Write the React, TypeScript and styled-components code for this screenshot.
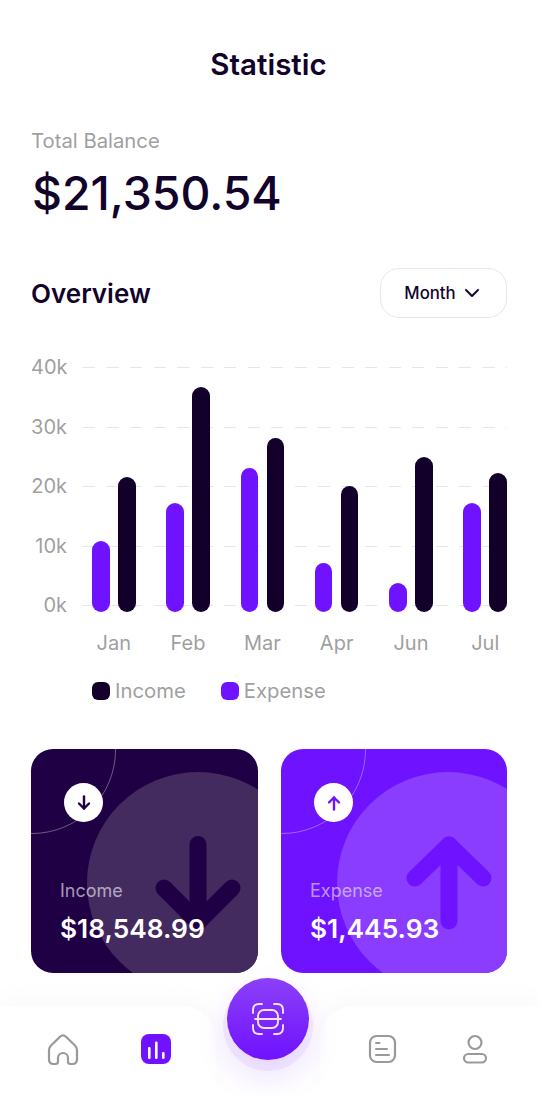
import React from 'react'
import styled, { createGlobalStyle } from 'styled-components'

const INK = '#12032b'
const PURPLE = '#6f12ff'
const DARK = '#1f0044'
const GREY = '#9f9f9f'

const Global = createGlobalStyle`
    html, body {
        margin: 0;
        padding: 0;
        background: #ffffff;
    }
    * {
        box-sizing: border-box;
    }
`

const Page = styled.div`
    width: 540px;
    height: 1098px;
    overflow: hidden;
    display: flex;
    flex-direction: column;
    font-family: Inter, "Liberation Sans", sans-serif;
    color: ${INK};
    background: #ffffff;
`

const Content = styled.main`
    display: flex;
    flex-direction: column;
    padding: 47px 33px 0 31px;
`

const Title = styled.h1`
    margin: 0;
    padding-right: 1px;
    font-size: 29.5px;
    line-height: 34px;
    font-weight: 600;
    text-align: center;
`

const BalanceLabel = styled.div`
    margin-top: 48px;
    font-size: 20.3px;
    line-height: 24px;
    color: ${GREY};
`

const BalanceValue = styled.div`
    margin-top: 12px;
    padding-left: 1px;
    font-size: 46.4px;
    line-height: 56px;
    font-weight: 500;
`

const OverviewRow = styled.div`
    margin-top: 47px;
    display: flex;
    align-items: center;
    justify-content: space-between;
`

const SectionTitle = styled.h2`
    margin: 0;
    padding-top: 1px;
    font-size: 26px;
    line-height: 30px;
    font-weight: 600;
`

const PeriodButton = styled.button`
    width: 127px;
    height: 50px;
    display: flex;
    align-items: center;
    justify-content: center;
    gap: 8px;
    padding: 0 3px 0 0;
    background: #ffffff;
    border: 1px solid #e7e5ef;
    border-radius: 19px;
    font-family: inherit;
    font-size: 16.8px;
    font-weight: 500;
    color: ${INK};
`

const Chart = styled.section`
    margin-top: 37px;
    display: grid;
    grid-template-columns: 52px 1fr;
`

const YAxis = styled.div`
    height: 262px;
    display: flex;
    flex-direction: column;
    justify-content: space-between;
    padding-right: 16px;
    text-align: right;
    font-size: 20px;
    line-height: 24px;
    color: ${GREY};
`

const Plot = styled.div`
    position: relative;
    display: flex;
    justify-content: space-between;
    padding-left: 9px;
`

const GridLines = styled.div`
    position: absolute;
    top: 12px;
    left: 0;
    right: 0;
    height: 239px;
    display: flex;
    flex-direction: column;
    justify-content: space-between;
`

const GridLine = styled.div`
    height: 1px;
    background: repeating-linear-gradient(90deg, #e6e4f0 0 12px, transparent 12px 23.5px);
`

const Group = styled.div`
    position: relative;
    width: 43.5px;
    display: flex;
    flex-direction: column;
    align-items: center;
`

const Bars = styled.div`
    width: 100%;
    height: 262px;
    padding-bottom: 5px;
    display: flex;
    align-items: flex-end;
    justify-content: space-between;
`

const Bar = styled.div<{ $dark?: boolean; $height: number }>`
    width: 17.5px;
    height: ${props => props.$height}px;
    border-radius: 9px;
    background: ${props => (props.$dark ? '#12002b' : PURPLE)};
`

const MonthLabel = styled.div`
    margin-top: 14px;
    font-size: 20px;
    line-height: 24px;
    color: ${GREY};
    white-space: nowrap;
`

const Legend = styled.div`
    margin-top: 24px;
    padding-left: 61px;
    display: flex;
    gap: 35px;
`

const LegendItem = styled.div`
    display: flex;
    align-items: center;
    gap: 5px;
    font-size: 20.3px;
    line-height: 24px;
    color: ${GREY};
`

const Swatch = styled.span<{ $color: string }>`
    width: 18px;
    height: 18px;
    border-radius: 6px;
    background: ${props => props.$color};
`

const Cards = styled.div`
    margin-top: 46px;
    display: grid;
    grid-template-columns: 227px 226px;
    justify-content: space-between;
`

const Card = styled.div<{ $bg: string; $overlay: string }>`
    position: relative;
    height: 224px;
    overflow: hidden;
    padding: 34px 0 0 29px;
    border-radius: 22px;
    color: #ffffff;
    background: ${props => props.$bg};

    &::before {
        content: '';
        position: absolute;
        left: 56px;
        top: 23px;
        width: 222px;
        height: 222px;
        border-radius: 50%;
        background: ${props => props.$overlay};
    }

    &::after {
        content: '';
        position: absolute;
        left: -83px;
        top: -83px;
        width: 166px;
        height: 166px;
        border-radius: 50%;
        border: 1px solid rgba(255, 255, 255, 0.35);
    }
`

const BigArrow = styled.svg`
    position: absolute;
    left: 122px;
    top: 76px;
    width: 90px;
    height: 110px;
    fill: none;
    stroke-width: 17;
    stroke-linecap: round;
    stroke-linejoin: round;
`

const CardBadge = styled.div`
    position: relative;
    z-index: 1;
    width: 39px;
    height: 39px;
    margin-left: 4px;
    display: flex;
    align-items: center;
    justify-content: center;
    border-radius: 50%;
    background: #ffffff;
`

const BadgeArrow = styled.svg`
    width: 20px;
    height: 20px;
    fill: none;
    stroke-width: 2.4;
    stroke-linecap: round;
    stroke-linejoin: round;
`

const CardLabel = styled.div<{ $color: string }>`
    position: relative;
    z-index: 1;
    margin-top: 58px;
    font-size: 18px;
    line-height: 22px;
    color: ${props => props.$color};
`

const CardValue = styled.div`
    position: relative;
    z-index: 1;
    margin-top: 11px;
    font-size: 26.3px;
    line-height: 32px;
    font-weight: 600;
`

const BottomNav = styled.nav`
    margin-top: 33px;
    height: 92px;
    display: grid;
    grid-template-columns: 216px 1fr 220px;
`

const NavPanel = styled.div<{ $side: 'left' | 'right' }>`
    display: flex;
    align-items: flex-start;
    padding-top: 26px;
    background: #ffffff;
    box-shadow: 0 -10px 22px rgba(30, 10, 60, 0.025);
    border-top-${props => props.$side === 'left' ? 'right' : 'left'}-radius: 34px;
`

const NavSlot = styled.div<{ $offset: number }>`
    width: 32px;
    height: 34px;
    margin-left: ${props => props.$offset}px;
    display: flex;
    align-items: center;
    justify-content: center;
`

const NavIcon = styled.svg`
    display: block;
    fill: none;
    stroke: #999999;
    stroke-width: 2.2;
    stroke-linecap: round;
    stroke-linejoin: round;
`

const FabSlot = styled.div`
    display: flex;
    justify-content: center;
`

const Fab = styled.button`
    position: relative;
    width: 82px;
    height: 82px;
    margin-top: -28px;
    padding: 0;
    border: none;
    border-radius: 50%;
    display: flex;
    align-items: center;
    justify-content: center;
    background: linear-gradient(180deg, #8b40f7 0%, #6f12ff 100%);
    box-shadow: 0 7px 0 4px rgba(111, 18, 255, 0.06), 0 16px 34px rgba(111, 18, 255, 0.14);
`

const ScanIcon = styled.svg`
    width: 34px;
    height: 34px;
    fill: none;
    stroke: #efe2ff;
    stroke-width: 1.9;
    stroke-linecap: round;
    stroke-linejoin: round;
`

const months = [
    { name: 'Jan', expense: 71, income: 135 },
    { name: 'Feb', expense: 109, income: 225 },
    { name: 'Mar', expense: 144, income: 174 },
    { name: 'Apr', expense: 49, income: 126 },
    { name: 'Jun', expense: 29, income: 155 },
    { name: 'Jul', expense: 109, income: 139 },
]

const ticks = ['40k', '30k', '20k', '10k', '0k']

const App: React.FC = () => {
    return (
        <Page>
            <Global />
            <Content>
                <Title>Statistic</Title>
                <BalanceLabel>Total Balance</BalanceLabel>
                <BalanceValue>$21,350.54</BalanceValue>

                <OverviewRow>
                    <SectionTitle>Overview</SectionTitle>
                    <PeriodButton>
                        Month
                        <svg width="16" height="10" viewBox="0 0 16 10" fill="none" stroke={INK} strokeWidth="1.9" strokeLinecap="round" strokeLinejoin="round">
                            <path d="M2 2l6 6 6-6" />
                        </svg>
                    </PeriodButton>
                </OverviewRow>

                <Chart>
                    <YAxis>
                        {ticks.map(tick => <div key={tick}>{tick}</div>)}
                    </YAxis>
                    <Plot>
                        <GridLines>
                            {ticks.map(tick => <GridLine key={tick} />)}
                        </GridLines>
                        {months.map(month => (
                            <Group key={month.name}>
                                <Bars>
                                    <Bar $height={month.expense} />
                                    <Bar $dark $height={month.income} />
                                </Bars>
                                <MonthLabel>{month.name}</MonthLabel>
                            </Group>
                        ))}
                    </Plot>
                </Chart>

                <Legend>
                    <LegendItem><Swatch $color="#12002b" />Income</LegendItem>
                    <LegendItem><Swatch $color={PURPLE} />Expense</LegendItem>
                </Legend>

                <Cards>
                    <Card $bg={DARK} $overlay="#432a5f">
                        <BigArrow viewBox="0 0 90 110" stroke={DARK}>
                            <path d="M45 19.5V97" />
                            <path d="M11 63L45 97L79 63" />
                        </BigArrow>
                        <CardBadge>
                            <BadgeArrow viewBox="0 0 20 20" stroke={DARK}>
                                <path d="M10 3.5v12" />
                                <path d="M5 10.5l5 5 5-5" />
                            </BadgeArrow>
                        </CardBadge>
                        <CardLabel $color="rgba(255, 255, 255, 0.6)">Income</CardLabel>
                        <CardValue>$18,548.99</CardValue>
                    </Card>
                    <Card $bg={PURPLE} $overlay="#8a3cff">
                        <BigArrow viewBox="0 0 90 110" stroke={PURPLE}>
                            <path d="M46 20V96" />
                            <path d="M12 53L46 20L80 53" />
                        </BigArrow>
                        <CardBadge>
                            <BadgeArrow viewBox="0 0 20 20" stroke={PURPLE}>
                                <path d="M10 16.5v-12" />
                                <path d="M5 9.5l5-5 5 5" />
                            </BadgeArrow>
                        </CardBadge>
                        <CardLabel $color="rgba(255, 255, 255, 0.55)">Expense</CardLabel>
                        <CardValue>$1,445.93</CardValue>
                    </Card>
                </Cards>
            </Content>

            <BottomNav>
                <NavPanel $side="left">
                    <NavSlot $offset={47}>
                        <NavIcon width="32" height="34" viewBox="0 0 32 34">
                            <path d="M4 13.5L13 4.8Q16 2 19 4.8L28 13.5Q30 15.5 30 18V27Q30 32 25.5 32H23.5Q21 32 21 29.5V26A5 5 0 0 0 11 26V29.5Q11 32 8.5 32H6.5Q2 32 2 27V18Q2 15.5 4 13.5Z" />
                        </NavIcon>
                    </NavSlot>
                    <NavSlot $offset={61}>
                        <svg width="30" height="30" viewBox="0 0 30 30">
                            <rect width="30" height="30" rx="8" fill={PURPLE} />
                            <rect x="7" y="13" width="2.6" height="12" rx="1.3" fill="#fff" />
                            <rect x="14" y="7.5" width="2.6" height="17.5" rx="1.3" fill="#fff" />
                            <rect x="21" y="18" width="2.6" height="7" rx="1.3" fill="#fff" />
                        </svg>
                    </NavSlot>
                </NavPanel>

                <FabSlot>
                    <Fab>
                        <ScanIcon viewBox="0 0 34 34">
                            <path d="M11 2H8Q2 2 2 8V11" />
                            <path d="M23 2H26Q32 2 32 8V11" />
                            <path d="M11 32H8Q2 32 2 26V23" />
                            <path d="M23 32H26Q32 32 32 26V23" />
                            <rect x="7" y="8" width="20" height="18" rx="6" />
                            <path d="M4 17H30" />
                        </ScanIcon>
                    </Fab>
                </FabSlot>

                <NavPanel $side="right">
                    <NavSlot $offset={46}>
                        <NavIcon width="29" height="30" viewBox="0 0 29 30">
                            <rect x="2" y="2" width="25" height="26" rx="6.5" />
                            <path d="M8 9H11.5" strokeWidth="2" />
                            <path d="M8 15H19" strokeWidth="2" />
                            <path d="M8 21H21" strokeWidth="2" />
                        </NavIcon>
                    </NavSlot>
                    <NavSlot $offset={61}>
                        <NavIcon width="28" height="32" viewBox="0 0 28 32">
                            <circle cx="14" cy="9.5" r="6.5" />
                            <rect x="3" y="21" width="22" height="8.5" rx="4.25" />
                        </NavIcon>
                    </NavSlot>
                </NavPanel>
            </BottomNav>
        </Page>
    )
}

export default App
